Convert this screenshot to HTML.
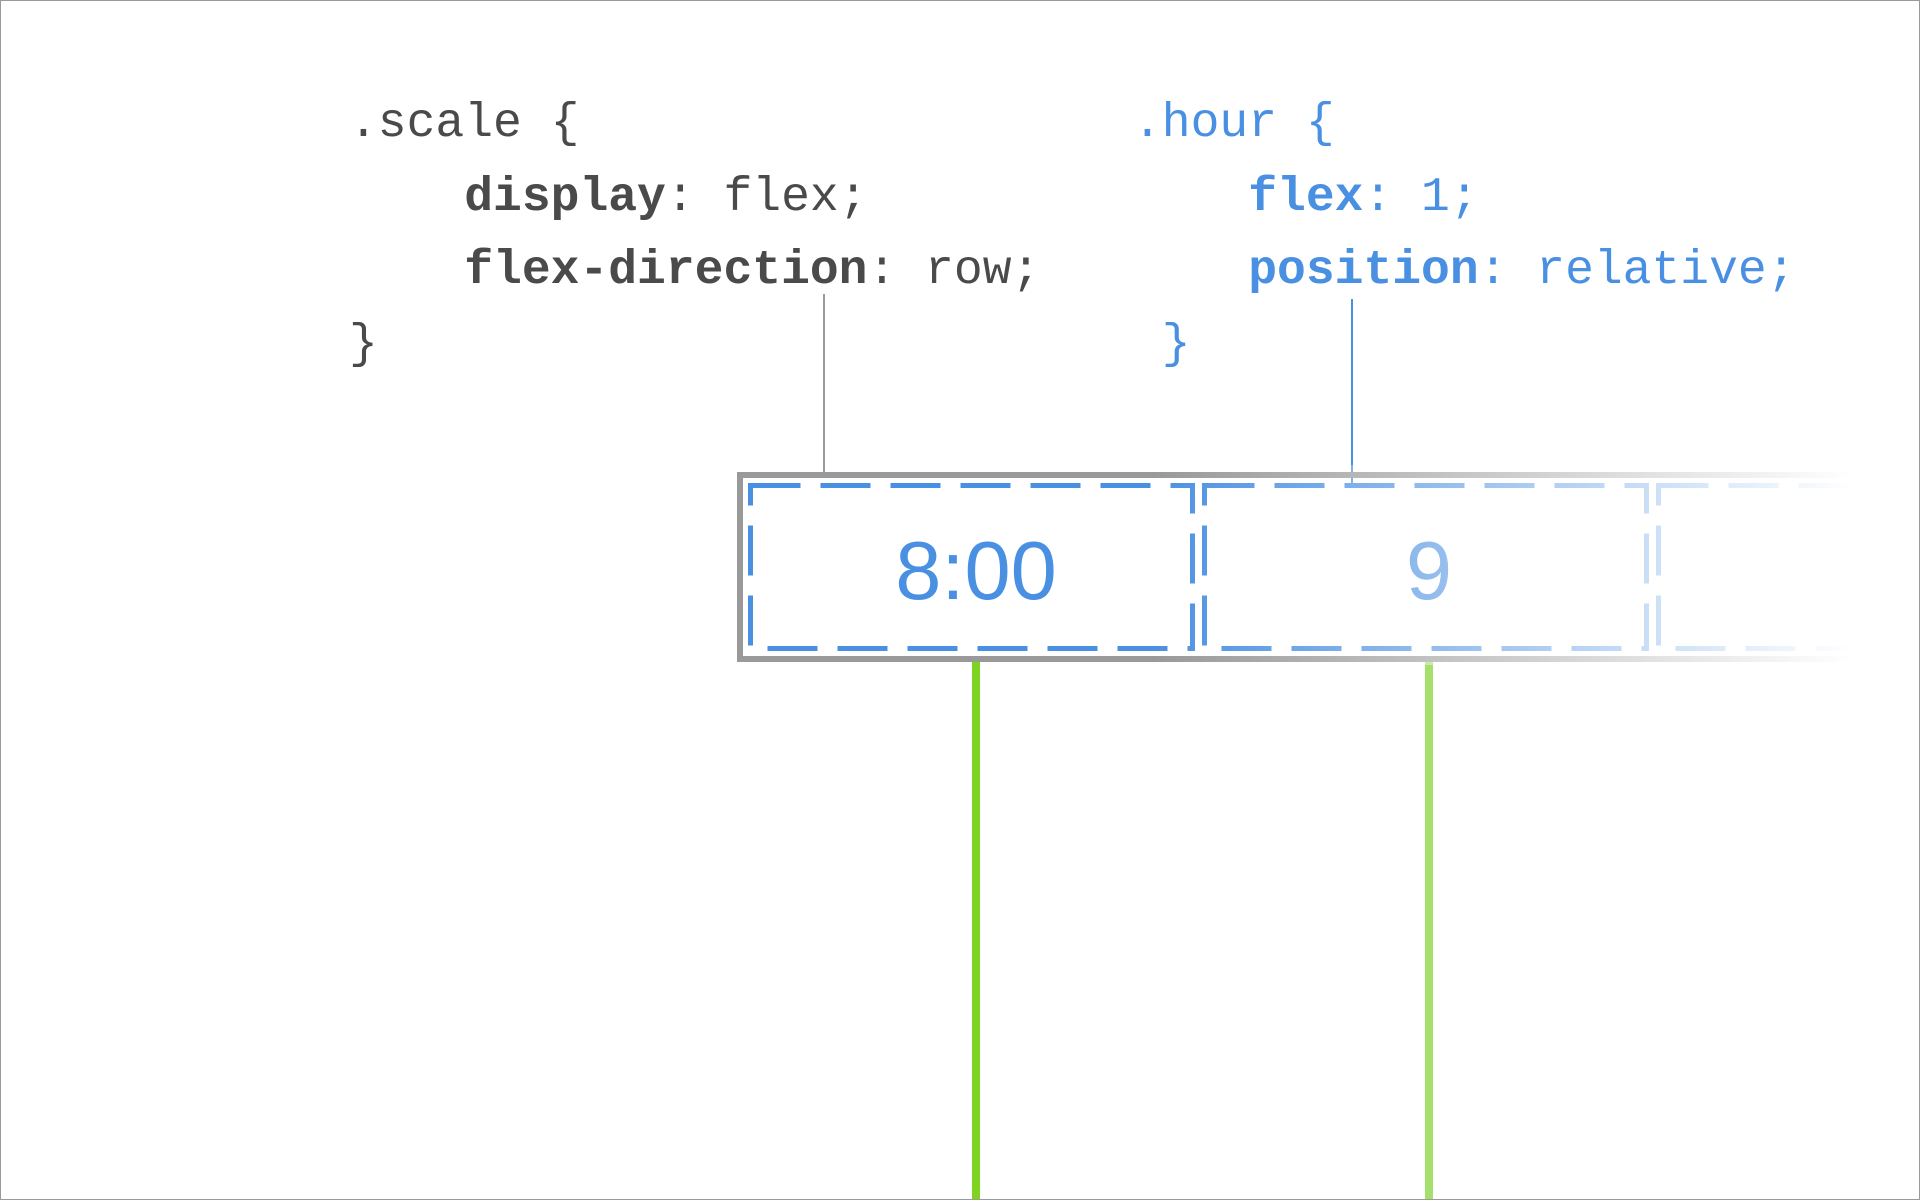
<!DOCTYPE html>
<html><head><style>
html,body{margin:0;padding:0;background:#fff;}
body{width:1920px;height:1200px;position:relative;overflow:hidden;}
.frame{position:absolute;left:0;top:0;width:1918px;height:1198px;border:1px solid #999;z-index:5;}
.code{position:absolute;font-family:"Liberation Mono","DejaVu Sans Mono",monospace;font-size:48px;line-height:73.5px;white-space:pre;}
.g{color:#4a4a4a}.b{color:#4a90e2}
.code b{font-weight:bold}
</style></head><body>
<div class="frame"></div>
<div class="code g" style="left:349px;top:88px">.scale {
    <b>display</b>: flex;
    <b>flex-direction</b>: row;
}</div>
<div class="code b" style="left:1133px;top:88px">.hour {
    <b>flex</b>: 1;
    <b>position</b>: relative;
 }</div>
<svg width="1920" height="1200" style="position:absolute;left:0;top:0">
<defs>
<linearGradient id="fade" x1="0" x2="1920" y1="0" y2="0" gradientUnits="userSpaceOnUse">
<stop offset="0.6" stop-color="#fff" stop-opacity="0"/>
<stop offset="0.965" stop-color="#fff" stop-opacity="1"/>
</linearGradient>
<clipPath id="c"><rect x="0" y="0" width="1890" height="1200"/></clipPath>
</defs>
<line x1="824" y1="294" x2="824" y2="474" stroke="#999" stroke-width="2"/>
<line x1="1352" y1="299" x2="1352" y2="484" stroke="#4a90e2" stroke-width="2"/>
<line x1="976" y1="662" x2="976" y2="1200" stroke="#7ed321" stroke-width="8"/>
<line x1="1429" y1="662" x2="1429" y2="1200" stroke="#a5e06a" stroke-width="8"/>
<g clip-path="url(#c)">
<rect x="740" y="475" width="1140" height="184" fill="none" stroke="#999" stroke-width="6"/>
<g fill="none" stroke="#4a90e2" stroke-width="5" stroke-dasharray="50 20">
<rect x="750.5" y="485.5" width="442" height="163"/>
<rect x="1204.5" y="485.5" width="442" height="163"/>
<rect x="1658.5" y="485.5" width="442" height="163"/>
</g>
</g>
<text x="976" y="599" text-anchor="middle" font-family="Liberation Sans, Arial, sans-serif" font-size="83" fill="#4a90e2">8:00</text>
<text x="1429" y="599" text-anchor="middle" font-family="Liberation Sans, Arial, sans-serif" font-size="83" fill="#4a90e2">9</text>
<rect x="0" y="465" width="1918" height="200" fill="url(#fade)"/>
</svg>
</body></html>
